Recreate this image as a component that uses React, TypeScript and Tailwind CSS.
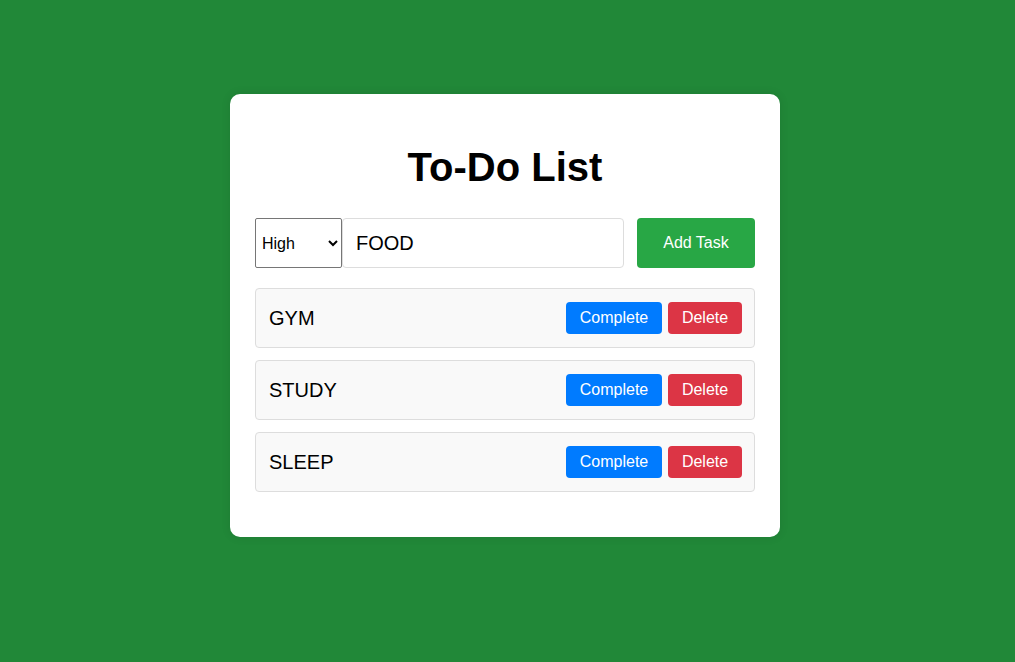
import { useState } from "react"

interface Task {
  text: string
  priority: string
}

const App = () => {
  const [tasks] = useState<Task[]>([
    { text: "GYM", priority: "High" },
    { text: "STUDY", priority: "High" },
    { text: "SLEEP", priority: "High" },
  ])
  const [priority, setPriority] = useState("High")
  const [value, setValue] = useState("FOOD")

  return (
    <div
      className="min-h-screen w-full bg-[#218838] flex justify-center pt-[94px] pr-[5px]"
      style={{ fontFamily: '"Liberation Sans", Arial, sans-serif' }}
    >
      <div className="w-[550px] h-[443px] bg-white rounded-[10px] shadow-[0_0_10px_rgba(0,0,0,0.1)] px-[25px] pt-[25px]">
        <h1 className="text-[40px] font-bold text-center text-black leading-[46px] mt-[25px] mb-[28px]">
          To-Do List
        </h1>

        <div className="flex items-center h-[50px]">
          <select
            value={priority}
            onChange={(e) => setPriority(e.target.value)}
            className="w-[87px] h-[50px] border border-[#767676] rounded-[2px] text-[16px] text-black bg-white pl-0.5"
          >
            <option>High</option>
            <option>Medium</option>
            <option>Low</option>
          </select>
          <input
            type="text"
            value={value}
            onChange={(e) => setValue(e.target.value)}
            className="w-[282px] h-[50px] border border-[#ddd] rounded-[4px] px-[13px] text-[20px] text-black outline-none"
          />
          <button className="ml-[13px] w-[118px] h-[50px] bg-[#28a745] text-white text-[16px] rounded-[4px]">
            Add Task
          </button>
        </div>

        <ul className="mt-[20px] flex flex-col gap-[12px]">
          {tasks.map((task) => (
            <li
              key={task.text}
              className="h-[60px] bg-[#f9f9f9] border border-[#ddd] rounded-[4px] flex items-center justify-between pl-[13px] pr-[12px]"
            >
              <span className="text-[20px] text-black">{task.text}</span>
              <div className="flex gap-[6px]">
                <button className="w-[96px] h-[32px] bg-[#007bff] text-white text-[16px] rounded-[4px]">
                  Complete
                </button>
                <button className="w-[74px] h-[32px] bg-[#dc3545] text-white text-[16px] rounded-[4px]">
                  Delete
                </button>
              </div>
            </li>
          ))}
        </ul>
      </div>
    </div>
  )
}

export default App
